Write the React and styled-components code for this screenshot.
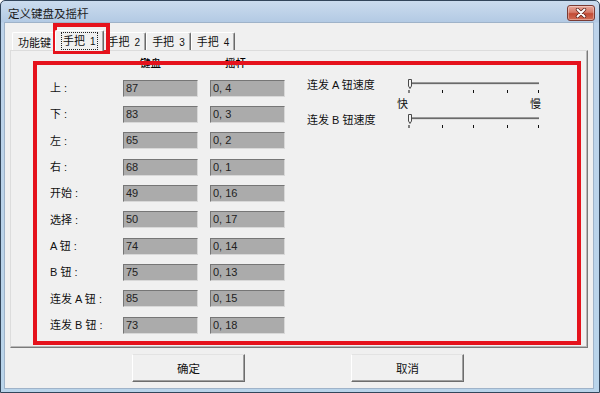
import React from 'react';
import styled, { createGlobalStyle } from 'styled-components';

const keys = [
  ['上', '87', '0, 4'],
  ['下', '83', '0, 3'],
  ['左', '65', '0, 2'],
  ['右', '68', '0, 1'],
  ['开始', '49', '0, 16'],
  ['选择', '50', '0, 17'],
  ['A 钮', '74', '0, 14'],
  ['B 钮', '75', '0, 13'],
  ['连发 A 钮', '85', '0, 15'],
  ['连发 B 钮', '73', '0, 18'],
];

const tabs = [
  { label: '功能键' },
  { label: '手把', num: '1', active: true },
  { label: '手把', num: '2' },
  { label: '手把', num: '3' },
  { label: '手把', num: '4' },
];

const GlobalStyle = createGlobalStyle`
  html, body {
    margin: 0;
    padding: 0;
    background: #fff;
  }
  body {
    font-family: "Liberation Sans", "Noto Sans CJK SC", sans-serif;
    font-size: 11px;
    color: #111;
  }
`;

const Window = styled.div`
  position: relative;
  box-sizing: border-box;
  width: 600px;
  height: 393px;
  display: flex;
  flex-direction: column;
  padding: 0 5px 3px 3px;
  border: 1px solid #33465b;
  border-radius: 5px 5px 0 0;
  background: linear-gradient(to bottom, #cbdcee 0, #b3cae4 21px, #bdd3ea 22px, #b9d4ea 100%);
`;

const TitleBar = styled.div`
  height: 21px;
  display: flex;
  align-items: flex-start;
  justify-content: space-between;
  padding-left: 4px;
`;

const Title = styled.span`
  font-family: "Noto Sans CJK SC", sans-serif;
  font-size: 11.5px;
  line-height: 24px;
  color: #1c1c1c;
`;

const CloseButton = styled.div`
  box-sizing: border-box;
  width: 28px;
  height: 16px;
  margin: 4px -1px 0 0;
  display: flex;
  align-items: center;
  justify-content: center;
  border: 1px solid #7a3a33;
  border-radius: 3px;
  background: linear-gradient(to bottom, #e9a89b 0, #d67a68 45%, #c24b35 55%, #d26d55 100%);
  box-shadow: inset 0 0 0 1px rgba(255, 255, 255, 0.35);
`;

const Client = styled.div`
  flex: 1;
  display: flex;
  flex-direction: column;
  padding: 7px 5px 6px 5px;
  background: #f0f0f0;
  border: 1px solid #9fb3c9;
`;

const TabRow = styled.div`
  height: 20px;
  display: flex;
  align-items: flex-end;
  padding-left: 2px;
`;

const Tab = styled.div`
  position: relative;
  z-index: ${p => (p.$active ? 1 : 0)};
  box-sizing: border-box;
  height: ${p => (p.$active ? '21px' : '18px')};
  margin: ${p => (p.$active ? '0 -2px -1px -2px' : '0')};
  padding: 0 ${p => (p.$active ? '6px' : '4px')};
  display: flex;
  align-items: center;
  background: #f0f0f0;
  border-top: 1px solid #fff;
  border-left: 1px solid #fff;
  border-right: 1px solid #6a6a6a;
  box-shadow: inset -1px 0 #a8a8a8;
  border-radius: 2px 2px 0 0;
  font-family: "Noto Sans CJK SC", sans-serif;
  font-size: 11px;
  color: #111;
`;

const TabText = styled.span`
  padding: 0 1px;
  line-height: 14px;
  outline: ${p => (p.$focus ? '1px dotted #222' : 'none')};
`;

const Num = styled.span`
  font-family: "Liberation Sans", sans-serif;
  font-size: 10px;
  margin-left: 5px;
`;

const Panel = styled.div`
  box-sizing: border-box;
  height: 298px;
  display: flex;
  align-items: flex-start;
  padding: 6px 0 0 39px;
  border: 1px solid;
  border-color: #dcdcdc #7a7a7a #7a7a7a #dcdcdc;
  box-shadow: inset -1px -1px #b8b8b8;
`;

const KeyGrid = styled.div`
  display: grid;
  grid-template-columns: 61px 75px 75px;
  grid-template-rows: 18px;
  grid-auto-rows: 26.33px;
  column-gap: 12px;
  align-items: center;
`;

const ColHead = styled.div`
  align-self: start;
  padding-left: ${p => p.$pad}px;
  font-family: "Noto Sans CJK SC", sans-serif;
  font-size: 10.5px;
  font-weight: 500;
  line-height: 12px;
  color: #000;
`;

const Label = styled.div`
  font-size: 11px;
  line-height: 14px;
  white-space: pre;
`;

const Field = styled.div`
  box-sizing: border-box;
  height: 17px;
  padding-left: 2px;
  background: #ababab;
  border-top: 1px solid #767676;
  border-left: 1px solid #767676;
  border-right: 1px solid #d8d8d8;
  border-bottom: 1px solid #d8d8d8;
  font-family: "Liberation Sans", sans-serif;
  font-size: 11px;
  line-height: 15px;
  color: #222;
`;

const SpeedSection = styled.div`
  margin: 22px 0 0 22px;
  display: flex;
  flex-direction: column;
`;

const SpeedRow = styled.div`
  display: grid;
  grid-template-columns: 101px 134px;
  height: 16px;
  margin-top: ${p => p.$top || 0}px;
`;

const SpeedLabel = styled.div`
  font-size: 11px;
  line-height: 12px;
  white-space: pre;
`;

const ScaleLabels = styled.div`
  width: 144px;
  margin: 2px 0 0 90px;
  display: flex;
  justify-content: space-between;
  font-family: "Noto Sans CJK SC", sans-serif;
  font-size: 11px;
  line-height: 12px;
`;

const ButtonRow = styled.div`
  display: flex;
  gap: 106px;
  margin-top: 6px;
  padding-left: 122px;
`;

const Button = styled.div`
  box-sizing: border-box;
  width: 113px;
  height: 28px;
  display: flex;
  align-items: center;
  justify-content: center;
  background: #f0f0f0;
  border: 1px solid;
  border-color: #e3e3e3 #6d6d6d #6d6d6d #ffffff;
  box-shadow: inset -1px -1px #a0a0a0;
  font-family: "Noto Sans CJK SC", sans-serif;
  font-size: 11.5px;
  color: #111;
`;

const Highlight = styled.div`
  position: absolute;
  pointer-events: none;
  box-sizing: border-box;
  left: ${p => p.$x}px;
  top: ${p => p.$y}px;
  width: ${p => p.$w}px;
  height: ${p => p.$h}px;
  border: 4px solid #e5121c;
`;

const Slider = () => (
  <svg width="134" height="16" viewBox="0 0 134 16">
    <rect x="2" y="3" width="129" height="1" fill="#9a9a9a" />
    <rect x="2" y="4" width="129" height="1" fill="#6a6a6a" />
    <rect x="2" y="5" width="129" height="1" fill="#dedede" />
    <path d="M0.5 0.5 H3.5 V7 L2 9.5 L0.5 7 Z" fill="#f4f4f4" stroke="#4a4a4a" strokeWidth="1" />
    {[0.5, 34, 65, 99, 130].map(x => (
      <rect key={x} x={x} y="11" width="1" height="3" fill="#111" />
    ))}
  </svg>
);

const Cross = () => (
  <svg width="12" height="10" viewBox="0 0 12 10">
    <path d="M2.5 1.5 L9.5 8.5 M9.5 1.5 L2.5 8.5" stroke="#5a2019" strokeWidth="3.4" strokeLinecap="round" />
    <path d="M2.5 1.5 L9.5 8.5 M9.5 1.5 L2.5 8.5" stroke="#fff" strokeWidth="2" strokeLinecap="round" />
  </svg>
);

const App = () => {
  return (
    <>
      <GlobalStyle />
      <Window>
        <TitleBar>
          <Title>定义键盘及摇杆</Title>
          <CloseButton>
            <Cross />
          </CloseButton>
        </TitleBar>
        <Client>
          <TabRow>
            {tabs.map((t, i) => (
              <Tab key={i} $active={t.active}>
                <TabText $focus={t.active}>
                  {t.label}
                  {t.num && <Num>{t.num}</Num>}
                </TabText>
              </Tab>
            ))}
          </TabRow>
          <Panel>
            <KeyGrid>
              <div />
              <ColHead $pad={17}>键盘</ColHead>
              <ColHead $pad={15}>摇杆</ColHead>
              {keys.map(([name, kb, js]) => (
                <React.Fragment key={name}>
                  <Label>{name} :</Label>
                  <Field>{kb}</Field>
                  <Field>{js}</Field>
                </React.Fragment>
              ))}
            </KeyGrid>
            <SpeedSection>
              <SpeedRow>
                <SpeedLabel>连发 A 钮速度</SpeedLabel>
                <Slider />
              </SpeedRow>
              <ScaleLabels>
                <span>快</span>
                <span>慢</span>
              </ScaleLabels>
              <SpeedRow $top={5}>
                <SpeedLabel>连发 B 钮速度</SpeedLabel>
                <Slider />
              </SpeedRow>
            </SpeedSection>
          </Panel>
          <ButtonRow>
            <Button>确定</Button>
            <Button>取消</Button>
          </ButtonRow>
        </Client>
        <Highlight $x={52} $y={22} $w={57} $h={31} />
        <Highlight $x={32} $y={60} $w={548} $h={284} />
      </Window>
    </>
  );
};

export default App;
